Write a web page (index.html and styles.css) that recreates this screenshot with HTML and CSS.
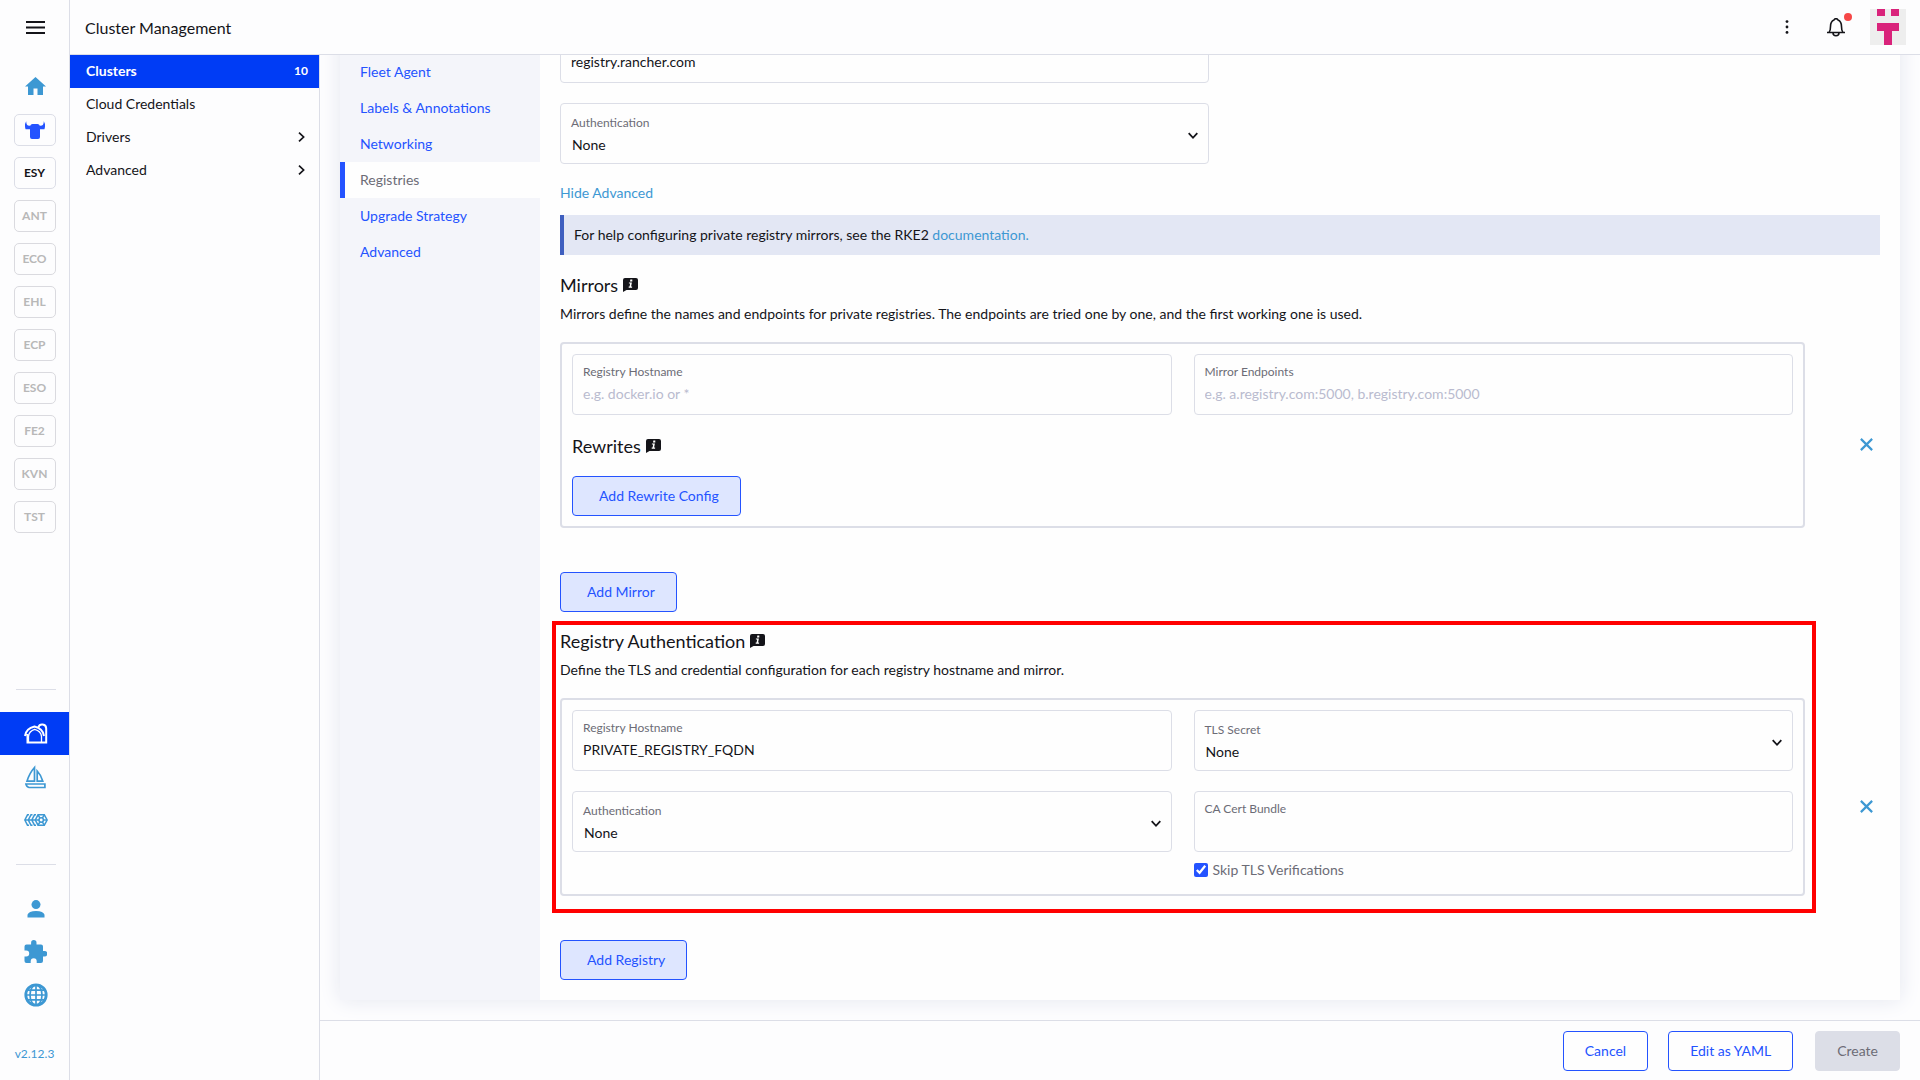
FILE: index.html
```html
<!DOCTYPE html>
<html lang="en">
<head>
<meta charset="utf-8">
<title>Cluster Management</title>
<link rel="stylesheet" href="styles.css">
</head>
<body>
<svg class="sprite" aria-hidden="true">
  <symbol id="info" viewBox="0 0 15 14"><path fill="currentColor" d="M2 0h11q2 0 2 2v8q0 2-2 2H3.500L0 14V2Q0 0 2 0z"/><path fill="#fff" d="M7.300 1.600h2v1.800H7zM5.900 4.400h3L8.100 8.600h1v1.200H5.700V8.600h.9l.5-3h-1.200z"/></symbol>
  <symbol id="down" viewBox="0 0 10 8"><path fill="none" stroke="currentColor" stroke-width="1.800" d="M.7 1.200 5 5.800 9.300 1.200"/></symbol>
  <symbol id="right" viewBox="0 0 7 10"><path fill="none" stroke="currentColor" stroke-width="1.700" d="M1 .7 5.600 5 1 9.300"/></symbol>
  <symbol id="close" viewBox="0 0 12 12"><path fill="none" stroke="currentColor" stroke-width="2" d="M.8.8 11.200 11.200M11.200.8.800 11.200"/></symbol>
</svg>
<div class="app">
  <nav class="rail" aria-label="Clusters">
    <button class="menu" aria-label="Menu"><svg width="19" height="13" viewBox="0 0 19 13"><path stroke="currentColor" stroke-width="2" d="M0 1h19M0 6.500h19M0 12h19"/></svg></button>
    <div class="rail-list">
      <a class="rail-icon rail-home" href="#" aria-label="Home"><svg width="21" height="18" viewBox="0 0 21 18"><path fill="currentColor" d="M10.500 0 21 9.500h-3V18h-5.500v-6.500h-4V18H3V9.500H0z"/></svg></a>
      <a class="rail-icon" href="#" aria-label="Local"><span class="badge badge-local"><svg width="20" height="18" viewBox="0 0 20 18"><path fill="currentColor" d="M1.300 0Q1 1.500 2 3.700 3 5 5.500 4.600 5.500 3 7.500 3h5q2 0 2 1.600 2.500.4 3.500-.9 1-2.200.7-3.700L20 3q.2 3.500-.6 5.200H15V16q0 2-2 2H7q-2 0-2-2V8.200H.6Q-.2 6.500 0 3z"/></svg></span></a>
      <a class="rail-icon" href="#"><span class="badge badge-ready">ESY</span></a>
      <a class="rail-icon" href="#"><span class="badge">ANT</span></a>
      <a class="rail-icon" href="#"><span class="badge">ECO</span></a>
      <a class="rail-icon" href="#"><span class="badge">EHL</span></a>
      <a class="rail-icon" href="#"><span class="badge">ECP</span></a>
      <a class="rail-icon" href="#"><span class="badge">ESO</span></a>
      <a class="rail-icon" href="#"><span class="badge">FE2</span></a>
      <a class="rail-icon" href="#"><span class="badge">KVN</span></a>
      <a class="rail-icon" href="#"><span class="badge">TST</span></a>
    </div>
    <hr class="rail-line">
    <div class="rail-group">
      <a class="rail-icon is-active" href="#" aria-label="Cluster Management"><svg width="24" height="21" viewBox="0 0 24 21"><g fill="none" stroke="currentColor" stroke-width="2"><path d="M3.500 11v8.500h18.700V5.500a4 4 0 0 0-7.800-1.200M1 13Q2 5.500 10.500 3.500 19 5.500 20 13"/><path stroke-width="1.300" d="M4.500 19v-5.500Q5 8 10.700 6.300 17 8 17.500 13.500V19"/></g></svg></a>
      <a class="rail-icon" href="#" aria-label="Continuous Delivery"><svg width="21" height="24" viewBox="0 0 21 24"><path fill="none" stroke="currentColor" stroke-width="1.700" d="M9.500 2.500v13.700H2Q4.500 8 9.500 2.500zM12.200 6v10.200h5.600Q16 10 12.200 6zM.9 19h19v3.500H4Q1.700 22 .9 19z"/></svg></a>
      <a class="rail-icon" href="#" aria-label="Virtualization Management"><svg width="24" height="12" viewBox="0 0 24 12"><g fill="none" stroke="currentColor" stroke-width="1.500"><path d="M5 .8H3.500L.8 6l2.700 5.200H5M8.500.8H7L4.300 6 7 11.200h1.500M12 .8h-1.500L7.800 6l2.700 5.200H12M1 6h11M14 .8h6.300L23.200 6l-2.900 5.200H14L11.300 6z"/><circle cx="17.200" cy="6" r="2.200"/><path d="m14 .8 2 3.400m4.300-3.400-2 3.400M14 11.200l2-3.400m4.300 3.400-2-3.400M12 6h3m4.500 0H23"/></g></svg></a>
    </div>
    <hr class="rail-line">
    <div class="rail-group">
      <a class="rail-icon" href="#" aria-label="Users"><svg width="18" height="18" viewBox="0 0 18 18"><circle cx="9" cy="4.600" r="4.500" fill="currentColor"/><path fill="currentColor" d="M.5 17.500v-2.700Q1.500 11 9 11t8.500 3.800v2.700z"/></svg></a>
      <a class="rail-icon" href="#" aria-label="Extensions"><svg width="23" height="23" viewBox="0 0 23 23"><path fill="currentColor" d="M20.500 11H19V6.500q0-2-2-2h-4.500V2.700a2.700 2.700 0 0 0-5.400 0v1.800H2.500q-2 0-2 2v4h1.700a3 3 0 0 1 0 6H.5V21q0 2 2 2h4.200v-1.700a3 3 0 0 1 6 0V23H17q2 0 2-2v-4.500h1.500a2.700 2.700 0 0 0 0-5.500z"/></svg></a>
      <a class="rail-icon" href="#" aria-label="Global Settings"><svg width="24" height="24" viewBox="0 0 24 24"><g fill="none" stroke="currentColor"><circle cx="12" cy="12" r="10.200" stroke-width="2.800"/><path stroke-width="1.700" d="M12 2v20M2.500 12h19M4 7.200h16M4 16.800h16"/><ellipse cx="12" cy="12" rx="6" ry="10" stroke-width="1.700"/></g></svg></a>
    </div>
    <a class="version" href="#">v2.12.3</a>
  </nav>

  <header class="topbar">
    <span class="title">Cluster Management</span>
    <div class="tools">
      <button class="tool" aria-label="Actions"><svg width="4" height="14" viewBox="0 0 4 14"><g fill="currentColor"><circle cx="2" cy="1.600" r="1.400"/><circle cx="2" cy="7" r="1.400"/><circle cx="2" cy="12.400" r="1.400"/></g></svg></button>
      <button class="tool bell" aria-label="Notifications"><svg width="18" height="19" viewBox="0 0 18 19"><path fill="none" stroke="currentColor" stroke-width="1.600" d="M0 14.500h18M2.200 14q1.300-1.500 1.300-5.500 0-5 3.500-6.500.6-1.400 2-1.400T11 2q3.500 1.500 3.500 6.500 0 4 1.300 5.500M6 14.700a3 3 0 0 0 6 0"/></svg><span class="dot"></span></button>
      <button class="avatar" aria-label="User menu"><svg width="36" height="36" viewBox="0 0 36 36"><path fill="#eee" d="M0 0h36v36H0z"/><path fill="#d9237b" d="M7 0h8v7H7zM21 0h8v7h-8zM7 14h22v8h-7v14h-8V22H7z"/></svg></button>
    </div>
  </header>

  <nav class="side" aria-label="Cluster Management">
    <a class="side-item is-active" href="#"><span>Clusters</span><span class="count">10</span></a>
    <a class="side-item" href="#">Cloud Credentials</a>
    <a class="side-item" href="#"><span>Drivers</span><svg width="7" height="10"><use href="#right"/></svg></a>
    <a class="side-item" href="#"><span>Advanced</span><svg width="7" height="10"><use href="#right"/></svg></a>
  </nav>

  <main class="main">
    <div class="card">
      <nav class="tabs" aria-label="Cluster configuration">
        <a class="tab" href="#">Fleet Agent</a>
        <a class="tab" href="#">Labels &amp; Annotations</a>
        <a class="tab" href="#">Networking</a>
        <a class="tab is-active" href="#">Registries</a>
        <a class="tab" href="#">Upgrade Strategy</a>
        <a class="tab" href="#">Advanced</a>
      </nav>
      <div class="panel">
        <div class="columns">
          <div class="field field-bare"><input type="text" value="registry.rancher.com" aria-label="Registry"></div>
        </div>
        <div class="columns">
          <div class="field field-select"><label for="auth">Authentication</label><select id="auth"><option>None</option></select><svg class="arrow" width="10" height="8"><use href="#down"/></svg></div>
        </div>
        <a class="toggle" href="#">Hide Advanced</a>
        <div class="banner">For help configuring private registry mirrors, see the RKE2 <a href="#">documentation.</a></div>

        <section>
          <h3>Mirrors <svg class="info" width="15" height="14"><use href="#info"/></svg></h3>
          <p>Mirrors define the names and endpoints for private registries. The endpoints are tried one by one, and the first working one is used.</p>
          <div class="entry">
            <div class="box">
              <div class="columns">
                <div class="field"><label for="mirror-host">Registry Hostname</label><input id="mirror-host" type="text" placeholder="e.g. docker.io or *"></div>
                <div class="field"><label for="mirror-ends">Mirror Endpoints</label><input id="mirror-ends" type="text" placeholder="e.g. a.registry.com:5000, b.registry.com:5000"></div>
              </div>
              <h3 class="rewrites">Rewrites <svg class="info" width="15" height="14"><use href="#info"/></svg></h3>
              <button class="btn btn-add">Add Rewrite Config</button>
            </div>
            <button class="remove" aria-label="Remove mirror"><svg width="13" height="13"><use href="#close"/></svg></button>
          </div>
          <button class="btn btn-add">Add Mirror</button>
        </section>

        <section class="registry-auth">
          <h3>Registry Authentication <svg class="info" width="15" height="14"><use href="#info"/></svg></h3>
          <p>Define the TLS and credential configuration for each registry hostname and mirror.</p>
          <div class="entry">
            <div class="box">
              <div class="columns">
                <div class="field"><label for="reg-host">Registry Hostname</label><input id="reg-host" type="text" value="PRIVATE_REGISTRY_FQDN"></div>
                <div class="field field-select"><label for="tls">TLS Secret</label><select id="tls"><option>None</option></select><svg class="arrow" width="10" height="8"><use href="#down"/></svg></div>
                <div class="field field-select"><label for="reg-auth">Authentication</label><select id="reg-auth"><option>None</option></select><svg class="arrow" width="10" height="8"><use href="#down"/></svg></div>
                <div>
                  <div class="field"><label for="ca">CA Cert Bundle</label><textarea id="ca" rows="1"></textarea></div>
                  <label class="check"><input type="checkbox" checked>Skip TLS Verifications</label>
                </div>
              </div>
            </div>
            <button class="remove" aria-label="Remove registry"><svg width="13" height="13"><use href="#close"/></svg></button>
          </div>
          <div class="highlight"></div>
          <button class="btn btn-add">Add Registry</button>
        </section>
      </div>
    </div>
  </main>

  <footer class="footer">
    <button class="btn">Cancel</button>
    <button class="btn">Edit as YAML</button>
    <button class="btn btn-create" disabled>Create</button>
  </footer>
</div>
</body>
</html>
```
FILE: styles.css
```css
:root {
  --text: #141419;
  --muted: #6c6c76;
  --border: #dcdee7;
  --primary: #2453ff;
  --active: #003cf5;
  --link: #3d98d3;
}

* { box-sizing: border-box; }

body {
  margin: 0;
  font: 14px/20px Lato, sans-serif;
  color: var(--text);
  background: #fdfdfe;
}

a { color: var(--link); text-decoration: none; }
button, input, select, textarea { font: inherit; color: inherit; }
button { cursor: pointer; }
svg { display: block; }
.sprite { position: absolute; width: 0; height: 0; }

.app {
  display: grid;
  grid-template: 55px minmax(0, 1fr) auto / 70px 250px minmax(0, 1fr);
  grid-template-areas:
    "rail top top"
    "rail side main"
    "rail side footer";
  height: 100vh;
}

/* Icon rail */
.rail {
  grid-area: rail;
  display: flex;
  flex-direction: column;
  border-right: 1px solid var(--border);
}
.menu {
  display: grid;
  place-items: center;
  height: 55px;
  padding: 0 0 0 2px;
  border: 0;
  background: none;
}
.rail-list { flex: 1; padding-top: 10px; }
.rail-icon {
  display: grid;
  place-items: center;
  height: 43px;
  padding-left: 2px;
}
.rail-home { padding-bottom: 2px; }
.rail-icon.is-active { background: var(--active); color: #fff; }
.badge {
  display: grid;
  place-items: center;
  width: 42px;
  height: 32px;
  margin-right: 2px;
  border: 1px solid #dadadf;
  border-radius: 5px;
  font-size: 12px;
  font-weight: 700;
  color: #b8b8b8;
}
.badge-ready { color: var(--text); border-color: var(--border); }
.badge-local { color: var(--primary); border-color: var(--border); }
.rail-line {
  width: 40px;
  margin: 0 0 22px 16px;
  border: 0;
  border-top: 1px solid var(--border);
}
.rail-group + .rail-line { margin-top: 23px; }
.version {
  padding: 28px 0 16px;
  font-size: 12px;
  text-align: center;
}

/* Header */
.topbar {
  grid-area: top;
  display: flex;
  align-items: center;
  justify-content: space-between;
  padding: 0 14px 0 15px;
  border-bottom: 1px solid var(--border);
}
.title { padding-top: 2px; font-size: 16px; }
.tools { display: flex; align-items: center; }
.tool {
  display: grid;
  place-items: center;
  width: 49px;
  height: 36px;
  padding: 0;
  border: 0;
  background: none;
}
.bell { position: relative; margin-right: 10px; }
.dot {
  position: absolute;
  top: 4px;
  right: 8px;
  width: 8px;
  height: 8px;
  border-radius: 50%;
  background: #f64747;
}
.avatar { padding: 0; border: 0; background: none; }

/* Side navigation */
.side { grid-area: side; border-right: 1px solid var(--border); }
.side-item {
  display: flex;
  align-items: center;
  justify-content: space-between;
  height: 33px;
  padding: 0 14px 2px 16px;
  color: var(--text);
}
.side-item.is-active { padding-right: 11px; background: var(--active); color: #fff; font-weight: 700; }
.count { font-size: 12px; }

/* Content card */
.main { grid-area: main; overflow: auto; scrollbar-width: none; }
.card {
  display: flex;
  margin: -33px 20px 20px;
  background: #fefefe;
  box-shadow: 0 0 20px #e4e6f0;
}
.tabs { width: 200px; padding-top: 32px; background: #f4f5fa; }
.tab {
  display: flex;
  align-items: center;
  height: 36px;
  padding: 0 15px;
  border-left: 5px solid transparent;
  color: var(--primary);
}
.tab.is-active { border-color: var(--primary); background: #fefefe; color: var(--muted); }
.panel { flex: 1; padding: 0 20px 20px; }

.columns {
  display: grid;
  grid-template-columns: 1fr 1fr;
  align-items: start;
  gap: 20px 22px;
}
.columns + .columns { margin-top: 20px; }

.field {
  position: relative;
  display: flex;
  flex-direction: column;
  gap: 4px;
  min-height: 61px;
  padding: 9px 10px 10px;
  border: 1px solid var(--border);
  border-radius: 4px;
}
.field label { font-size: 12px; line-height: 16px; color: var(--muted); }
.field input, .field select, .field textarea {
  width: 100%;
  height: 20px;
  padding: 0;
  border: 0;
  outline: 0;
  background: none;
  resize: none;
}
.field ::placeholder { color: #b9bbcf; opacity: 1; }
.field-bare { padding-top: 29px; }
.field-select { padding: 11px 11px 8px; }
.field-select label { margin-left: -1px; }
.field select { appearance: none; }
.arrow { position: absolute; top: 28px; right: 10px; pointer-events: none; }

.toggle { display: block; margin: 19px 0 12px; }
.banner {
  padding: 10px;
  border-left: 4px solid #3f5fbf;
  background: #e3e7f4;
}

h3 {
  display: flex;
  align-items: center;
  gap: 5px;
  margin: 19px 0 8px;
  font-size: 18px;
  font-weight: 400;
  line-height: 22px;
}
p { margin: 0 0 18px; }
.rewrites { margin: 20px 0 19px; }
.registry-auth h3 { margin-top: 18px; }

.entry {
  display: grid;
  grid-template-columns: 1fr 75px;
  align-items: center;
  margin-bottom: 44px;
}
.box { padding: 10px; border: 2px solid var(--border); border-radius: 4px; }
.remove {
  display: grid;
  place-items: center;
  justify-self: end;
  width: 28px;
  height: 28px;
  margin-top: 18px;
  padding: 0;
  border: 0;
  background: none;
  color: var(--link);
}
.check {
  display: flex;
  align-items: center;
  gap: 5px;
  padding: 8px 0 4px;
  color: var(--muted);
}
.check input {
  width: 14px;
  height: 14px;
  margin: 0;
  accent-color: var(--primary);
}

/* Callout drawn around the registry authentication form */
.registry-auth { position: relative; }
.highlight {
  position: absolute;
  inset: -9px 64px 67px -8px;
  border: 4px solid #f00;
  pointer-events: none;
}

.btn {
  height: 40px;
  padding: 0 21px;
  border: 1px solid var(--primary);
  border-radius: 4px;
  background: #fefefe;
  color: var(--primary);
}
.btn-add { padding-left: 26px; background: #dee6ff; }
.btn-create { margin-left: 2px; border-color: var(--border); background: var(--border); color: var(--muted); }

.footer {
  grid-area: footer;
  display: flex;
  justify-content: flex-end;
  gap: 20px;
  padding: 10px 20px 9px;
  border-top: 1px solid var(--border);
}
```
